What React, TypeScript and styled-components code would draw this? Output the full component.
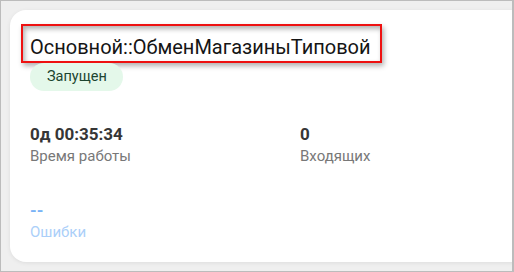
import React from "react";
import styled, { createGlobalStyle } from "styled-components";

const GlobalStyle = createGlobalStyle`
  html, body {
    margin: 0;
    padding: 0;
    background: #efefef;
    font-family: Roboto, "Noto Sans", "Liberation Sans", sans-serif;
  }
`;

const Frame = styled.div`
  box-sizing: border-box;
  width: 514px;
  height: 272px;
  overflow: hidden;
  background: #efefef;
  border: 1px solid #bcbcbc;
  border-right-width: 2px;
  padding: 9px 0 0 9px;
`;

const Card = styled.div`
  box-sizing: border-box;
  width: 580px;
  height: 252px;
  background: #ffffff;
  border-radius: 16px;
  box-shadow: 0 1px 4px rgba(0, 0, 0, 0.08);
  padding: 14px 20px 19px 20px;
  display: flex;
  flex-direction: column;
  align-items: flex-start;
`;

const Title = styled.h2`
  display: inline-block;
  margin: 0 0 0 -9px;
  padding: 9px 9px 2px 7px;
  border: 2px solid #ee1111;
  box-shadow: 2px 3px 5px rgba(0, 0, 0, 0.3),
    inset 2px 3px 5px rgba(0, 0, 0, 0.3);
  font-size: 20px;
  line-height: 24px;
  font-weight: 400;
  color: #151515;
  white-space: nowrap;
`;

const Badge = styled.span`
  display: inline-block;
  height: 28px;
  line-height: 28px;
  padding: 0 16px 0 17px;
  border-radius: 14px;
  background: #e4f8ea;
  color: #1c4530;
  font-size: 14.5px;
`;

const Stats = styled.div`
  display: grid;
  grid-template-columns: repeat(2, 270px);
  row-gap: 32px;
  margin-top: 31px;
`;

const Stat = styled.div`
  display: flex;
  flex-direction: column;
`;

const Value = styled.div<{ $tone?: "link" }>`
  font-size: 17px;
  line-height: 24px;
  font-weight: 700;
  color: ${(p) => (p.$tone === "link" ? "#79b3f6" : "#363636")};
`;

const Label = styled.div<{ $tone?: "link" }>`
  font-size: 15px;
  line-height: 20px;
  color: ${(p) => (p.$tone === "link" ? "#abcff9" : "#787878")};
`;

const stats = [
  { value: "0д 00:35:34", label: "Время работы" },
  { value: "0", label: "Входящих" },
  { value: "--", label: "Ошибки", tone: "link" as const },
];

export default function App() {
  return (
    <>
      <GlobalStyle />
      <Frame>
        <Card>
          <Title>Основной::ОбменМагазиныТиповой</Title>
          <Badge>Запущен</Badge>
          <Stats>
            {stats.map((s) => (
              <Stat key={s.label}>
                <Value $tone={s.tone}>{s.value}</Value>
                <Label $tone={s.tone}>{s.label}</Label>
              </Stat>
            ))}
          </Stats>
        </Card>
      </Frame>
    </>
  );
}
